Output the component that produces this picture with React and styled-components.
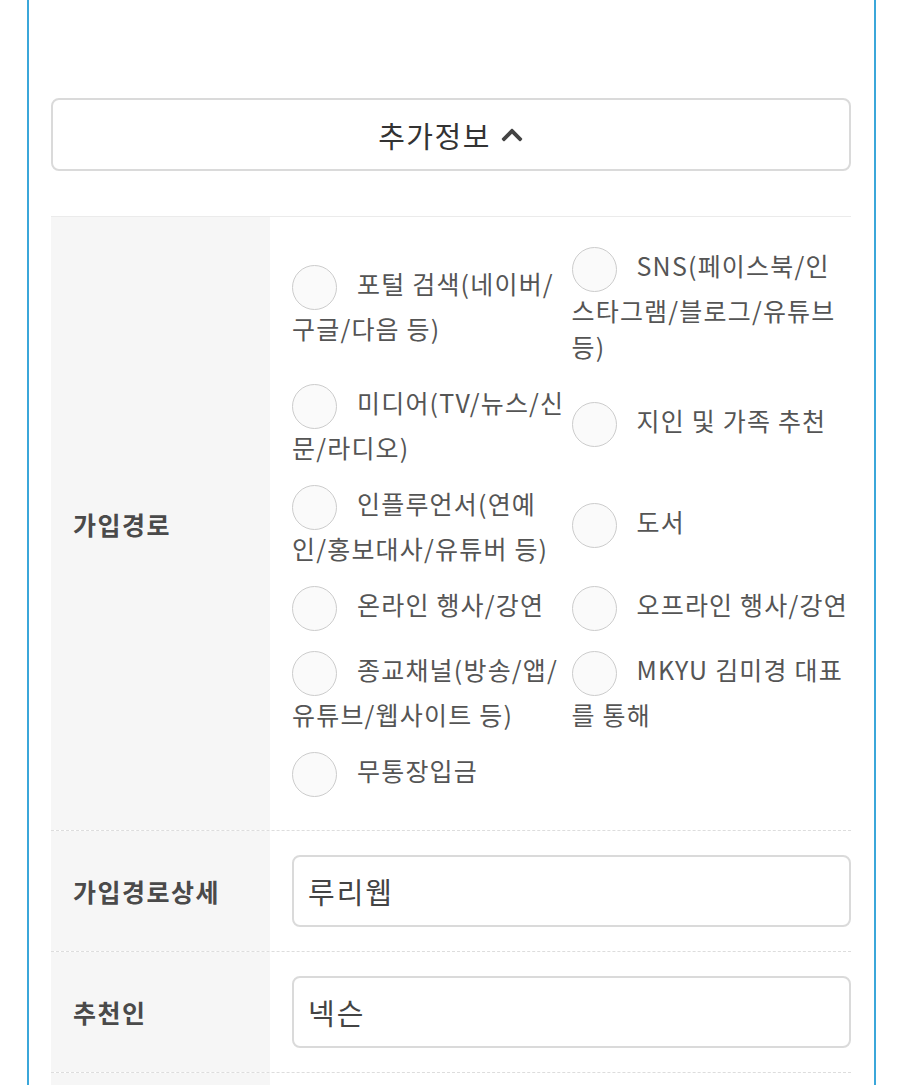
import styled, { createGlobalStyle } from "styled-components";
import { FaChevronUp } from "react-icons/fa";

const joinPaths = [
    "포털 검색(네이버/구글/다음 등)",
    "SNS(페이스북/인스타그램/블로그/유튜브 등)",
    "미디어(TV/뉴스/신문/라디오)",
    "지인 및 가족 추천",
    "인플루언서(연예인/홍보대사/유튜버 등)",
    "도서",
    "온라인 행사/강연",
    "오프라인 행사/강연",
    "종교채널(방송/앱/유튜브/웹사이트 등)",
    "MKYU 김미경 대표를 통해",
    "무통장입금",
];

function App() {
    return (
        <>
            <GlobalStyle />
            <Page>
                <ToggleButton type="button">
                    추가정보
                    <FaChevronUp size={24} color="#444" />
                </ToggleButton>

                <Table>
                    <Row>
                        <Label>가입경로</Label>
                        <Cell $radio>
                            <RadioGroup>
                                {joinPaths.map((text) => (
                                    <RadioItem key={text}>
                                        <Radio type="radio" name="joinPath" />
                                        {text}
                                    </RadioItem>
                                ))}
                            </RadioGroup>
                        </Cell>
                    </Row>
                    <Row>
                        <Label>가입경로상세</Label>
                        <Cell>
                            <Input value="루리웹" readOnly />
                        </Cell>
                    </Row>
                    <Row>
                        <Label>추천인</Label>
                        <Cell>
                            <Input value="넥슨" readOnly />
                        </Cell>
                    </Row>
                    <Row>
                        <Label />
                        <Cell />
                    </Row>
                </Table>
            </Page>
        </>
    );
}

const GlobalStyle = createGlobalStyle`
    html, body {
        margin: 0;
        padding: 0;
        background: #fff;
    }
    body {
        font-family: "Noto Sans CJK KR", "Noto Sans", sans-serif;
    }
    * {
        box-sizing: border-box;
    }
`;

const Page = styled.div`
    margin-left: 27px;
    width: 849px;
    min-height: 1300px;
    border-left: 2px solid #3ba7da;
    border-right: 2px solid #3ba7da;
    padding: 98px 23px 0 22px;
`;

const ToggleButton = styled.button`
    width: 100%;
    height: 73px;
    margin-bottom: 45px;
    display: flex;
    align-items: center;
    justify-content: center;
    gap: 9px;
    background: #fff;
    border: 2px solid #dadada;
    border-radius: 8px;
    font-family: inherit;
    font-size: 29px;
    letter-spacing: 1.5px;
    color: #333;
    padding: 0;
`;

const Table = styled.div`
    border-top: 1px solid #ebebeb;
`;

const Row = styled.div`
    display: grid;
    grid-template-columns: 219px 1fr;
    min-height: 121px;
    border-bottom: 1px dashed #dddddd;
`;

const Label = styled.div`
    display: flex;
    align-items: center;
    padding-left: 22px;
    background: #f6f6f6;
    font-size: 25px;
    letter-spacing: 1.5px;
    font-weight: 700;
    color: #4a4a4a;
`;

const Cell = styled.div`
    padding: ${(p) => (p.$radio ? "30px 0 33px 22px" : "24px 0 24px 22px")};
`;

const RadioGroup = styled.div`
    display: flex;
    flex-wrap: wrap;
    align-items: center;
    row-gap: 20px;
`;

const RadioItem = styled.label`
    width: 50%;
    padding-right: 2px;
    font-size: 25px;
    letter-spacing: 1.2px;
    line-height: 36px;
    color: #555;
`;

const Radio = styled.input`
    appearance: none;
    display: inline-block;
    width: 45px;
    height: 45px;
    margin: 0 20px 0 0;
    vertical-align: middle;
    border: 1px solid #cccccc;
    border-radius: 50%;
    background: #fafafa;
`;

const Input = styled.input`
    display: block;
    width: 100%;
    height: 72px;
    padding: 0 14px;
    border: 2px solid #dadada;
    border-radius: 8px;
    font-family: inherit;
    font-size: 29px;
    letter-spacing: 2px;
    color: #444;
    outline: none;
`;

export default App;
